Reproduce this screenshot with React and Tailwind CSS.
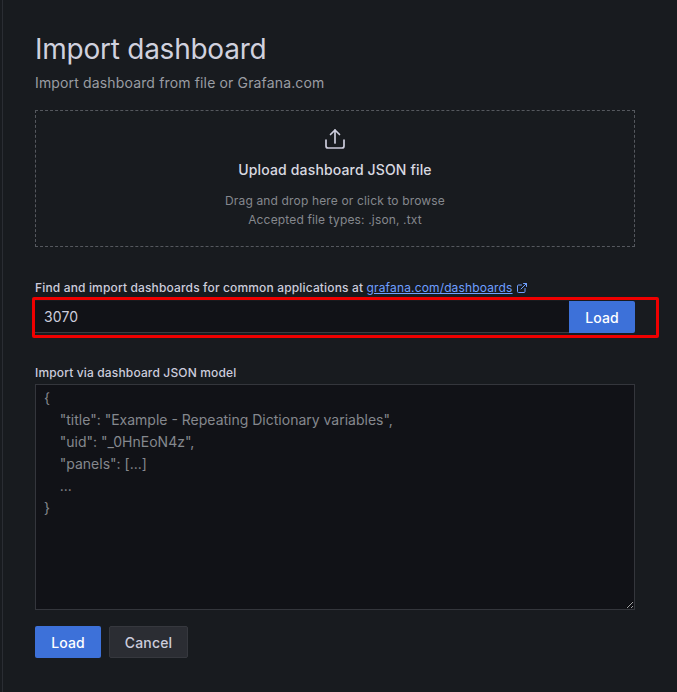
import React from 'react';
import { ExternalLink } from 'lucide-react';

const jsonExample = `{
    "title": "Example - Repeating Dictionary variables",
    "uid": "_0HnEoN4z",
    "panels": [...]
    ...
}`;

const UploadIcon = () => (
  <svg width="24" height="24" viewBox="0 0 24 24" fill="none" stroke="currentColor" strokeWidth="1.7" strokeLinecap="round" strokeLinejoin="round" className="mt-[16px] text-[#ccccdc]">
    <path d="M3 13v6a2 2 0 0 0 2 2h14a2 2 0 0 0 2-2v-6" />
    <path d="M12 16V3" />
    <path d="M7.5 7.5 12 3l4.5 4.5" />
  </svg>
);

const App = () => {
  return (
    <div className="min-h-[692px] bg-[#181b1f] pl-[2px] font-['Inter',sans-serif] tracking-[0.15px] text-[#ccccdc] overflow-hidden">
      <div className="min-h-[692px] border-l border-[#2a2d33] pl-[32px] pr-[42px] pt-[32px]">
        <h1 className="text-[28px] leading-[34px] font-normal tracking-[-0.25px] text-[#d0d1de]">Import dashboard</h1>
        <p className="mt-[6px] text-[14px] leading-[21px] text-[#9a9da3]">Import dashboard from file or Grafana.com</p>

        <div className="mt-[17px] h-[137px] border border-dashed border-[#55585e] flex flex-col items-center">
          <UploadIcon />
          <div className="mt-[8px] text-[14px] leading-[21px] font-medium text-[#d8d9e0]">Upload dashboard JSON file</div>
          <div className="mt-[11px] text-[12px] leading-[19px] text-[#85888e] text-center">
            <div>Drag and drop here or click to browse</div>
            <div>Accepted file types: .json, .txt</div>
          </div>
        </div>

        <label className="block mt-[32px] text-[12px] leading-[18px] font-medium text-[#ccccdc]">
          Find and import dashboards for common applications at{' '}
          <a className="font-normal text-[#6e9fff] underline">grafana.com/dashboards</a>
          <ExternalLink size={12} className="inline ml-[3px] mb-[1px] text-[#6e9fff]" />
        </label>

        <div className="relative mt-[4px] flex h-[32px]">
          <input
            defaultValue="3070"
            className="flex-1 min-w-0 h-[32px] bg-[#111217] border-b border-[#3a3c42] pl-[9px] text-[14px] text-[#ccccdc] outline-none"
          />
          <button className="w-[66px] h-[32px] bg-[#3d71d9] rounded-r-[2px] text-[14px] font-medium text-white">Load</button>
          {/* annotation box from the screenshot */}
          <div className="absolute left-[-3px] right-[-24px] top-[-4px] bottom-[-5px] border-[3px] border-[#ee0000] rounded-[2px] pointer-events-none" />
        </div>

        <label className="block mt-[31px] text-[12px] leading-[18px] font-medium text-[#ccccdc]">Import via dashboard JSON model</label>

        <textarea
          readOnly
          defaultValue={jsonExample}
          className="block mt-[2px] w-full h-[226px] bg-[#111217] border border-[#34363c] pl-[8px] pt-[2px] text-[14px] leading-[22px] tracking-normal text-[#85888e] outline-none resize-y overflow-hidden"
        />

        <div className="mt-[16px] flex gap-[8px]">
          <button className="w-[66px] h-[32px] bg-[#3d71d9] rounded-[2px] text-[14px] font-medium text-white">Load</button>
          <button className="w-[79px] h-[32px] bg-[#2b2d33] border border-[#36383e] rounded-[2px] text-[14px] font-medium text-[#ccccdc]">Cancel</button>
        </div>
      </div>
    </div>
  );
};

export default App;
